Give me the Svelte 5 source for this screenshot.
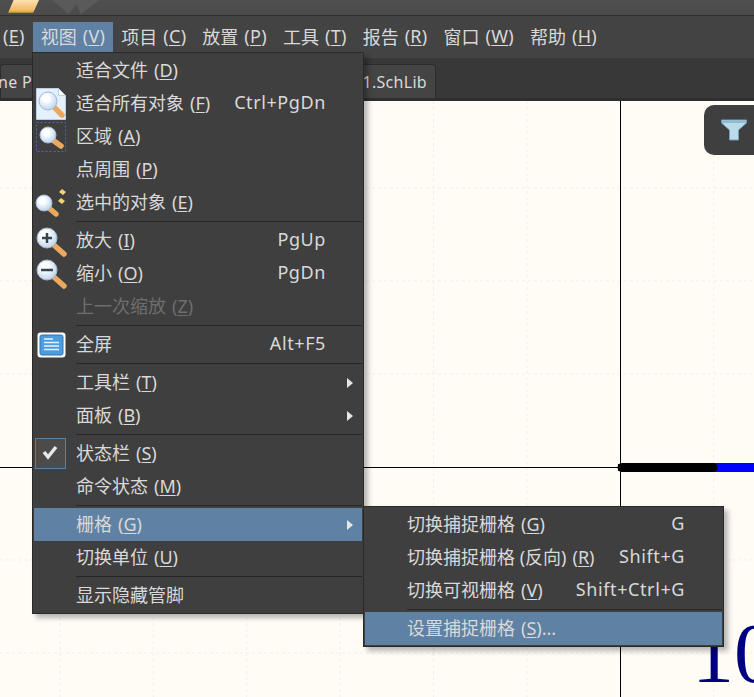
<script>
	const topMenus = [
		["", "E"],
		["视图", "V"],
		["项目", "C"],
		["放置", "P"],
		["工具", "T"],
		["报告", "R"],
		["窗口", "W"],
		["帮助", "H"],
	];

	// lens: [cx, cy, r, handle x, handle y], local to the 42x33 icon slot
	const viewMenu = [
		[
			{ label: "适合文件", key: "D" },
			{ label: "适合所有对象", key: "F", shortcut: "Ctrl+PgDn", icon: "page", lens: [14, 14, 9, 28, 28] },
			{ label: "区域", key: "A", icon: "area", lens: [14, 15, 8, 27, 26] },
			{ label: "点周围", key: "P" },
			{ label: "选中的对象", key: "E", icon: "selected", lens: [10, 17, 8, 22, 28] },
		],
		[
			{ label: "放大", key: "I", shortcut: "PgUp", icon: "plus", lens: [13, 14, 10, 30, 30] },
			{ label: "缩小", key: "O", shortcut: "PgDn", icon: "minus", lens: [13, 13, 10, 30, 29] },
			{ label: "上一次缩放", key: "Z", disabled: true },
		],
		[{ label: "全屏", shortcut: "Alt+F5", icon: "screen" }],
		[
			{ label: "工具栏", key: "T", more: true },
			{ label: "面板", key: "B", more: true },
		],
		[
			{ label: "状态栏", key: "S", icon: "check" },
			{ label: "命令状态", key: "M" },
		],
		[
			{ label: "栅格", key: "G", more: true, active: true },
			{ label: "切换单位", key: "U" },
		],
		[{ label: "显示隐藏管脚" }],
	];

	const gridMenu = [
		[
			{ label: "切换捕捉栅格", key: "G", shortcut: "G" },
			{ label: "切换捕捉栅格 (反向)", key: "R", shortcut: "Shift+G" },
			{ label: "切换可视栅格", key: "V", shortcut: "Shift+Ctrl+G" },
		],
		[{ label: "设置捕捉栅格", key: "S", tail: "...", active: true }],
	];

	const gridX = [60, 153.3, 246.7, 340, 433.5, 527, 713.7];
	const gridY = [87, 180, 273, 459, 552];
</script>

{#snippet menuList(groups)}
	{#each groups as group, g}
		{#if g > 0}<div class="sep"></div>{/if}
		{#each group as item}
			<div class="row" class:active={item.active} class:disabled={item.disabled}>
				<span class="slot">
					{#if item.icon}
						<svg width="42" height="33" viewBox="0 0 42 33">
							{#if item.icon === "page"}
								<path d="M2.500 1.500h22l7 7v24h-29z" fill="#e4f0fb" stroke="#b9cfe6" />
								<path d="M24.500 1.500v7h7z" fill="#fff" stroke="#b9cfe6" />
							{:else if item.icon === "area"}
								<rect x="2.500" y="2.500" width="29" height="29" fill="none" stroke="#5a64a8" stroke-dasharray="2 2" />
							{:else if item.icon === "selected"}
								<path d="M28 3l4 3-3 3-4-3zM27 12l4 3-3 3-4-3z" fill="#f2d272" />
							{:else if item.icon === "screen"}
								<rect x="3.500" y="4.500" width="28" height="25" rx="3" fill="#fff" />
								<rect x="6" y="7" width="23" height="20" rx="2" fill="#4c9ce0" stroke="#2f74b5" />
								<path d="M10 11h9M10 14.500h15M10 18h15M10 21.500h15" stroke="#e6f3fd" stroke-width="1.300" />
							{:else if item.icon === "check"}
								<rect x="1.500" y="1.500" width="30" height="30" fill="#4b4b4b" stroke="#5d7f9e" />
								<path d="M10 15l4 5 8-10" fill="none" stroke="#e8e8e8" stroke-width="3.500" />
							{/if}
							{#if item.lens}
								{@const [cx, cy, r, hx, hy] = item.lens}
								<line x1={cx + r * 0.72} y1={cy + r * 0.72} x2={hx} y2={hy} stroke="#eba95f" stroke-width="5.500" stroke-linecap="round" />
								<circle {cx} {cy} {r} fill="url(#lens-fill)" stroke="#a8b8cc" />
							{/if}
							{#if item.icon === "plus"}
								<path d="M8 14h10M13 9v10" stroke="#39424f" stroke-width="2.500" />
							{:else if item.icon === "minus"}
								<path d="M7 13h12" stroke="#39424f" stroke-width="2.500" />
							{/if}
						</svg>
					{/if}
				</span>
				<span class="label">
					{item.label}{#if item.key}<span class="key">(<u>{item.key}</u>)</span>{/if}{item.tail ?? ""}
				</span>
				{#if item.shortcut}<span class="shortcut">{item.shortcut}</span>{/if}
				{#if item.more}<span class="arrow"></span>{/if}
			</div>
		{/each}
	{/each}
{/snippet}

<div class="app">
	<svg class="defs" width="0" height="0">
		<radialGradient id="lens-fill" cx="0.4" cy="0.35" r="0.7">
			<stop offset="0.25" stop-color="#ffffff" />
			<stop offset="1" stop-color="#b4d0f0" />
		</radialGradient>
	</svg>

	<div class="titlebar">
		<span class="folder"></span>
		<span class="ghost"></span>
	</div>

	<nav class="menubar">
		{#each topMenus as [name, key]}
			<span class="top-item" class:open={key === "V"}>
				{name}<span class="key" class:bare={!name}>(<u>{key}</u>)</span>
			</span>
		{/each}
	</nav>

	<div class="tabbar">
		<div class="tab first">ne Page</div>
		<div class="tab">1.SchLib</div>
	</div>

	<div class="canvas">
		<svg class="sheet" width="754" height="596" viewBox="0 0 754 596">
			{#each gridX as x}
				<line x1={x} y1="0" x2={x} y2="596" class="grid" />
			{/each}
			{#each gridY as y}
				<line x1="0" y1={y} x2="754" y2={y} class="grid" />
			{/each}
			<line x1="0" y1="366.500" x2="620" y2="366.500" stroke="#000" />
			<line x1="620.500" y1="0" x2="620.500" y2="596" stroke="#000" />
			<line x1="700" y1="366.500" x2="754" y2="366.500" stroke="#0000ff" stroke-width="9" />
			<line x1="622" y1="366.500" x2="713" y2="366.500" stroke="#000" stroke-width="9" stroke-linecap="round" />
			<path d="M616 366.500h10M618.500 363v7M622.500 363v7" stroke="#000" />
			<text x="692" y="581" class="pin-number">10</text>
		</svg>
		<div class="filter">
			<svg width="28" height="24" viewBox="0 0 28 24">
				<path d="M1.500 2h25v3l-8 7v10h-9V12l-8-7z" fill="#b9dcea" stroke="#7b9db8" />
				<path d="M2 3h24v2H2z" fill="#8fbad4" />
			</svg>
		</div>
	</div>

	<div class="menu view-menu">
		{@render menuList(viewMenu)}
	</div>
	<div class="menu grid-menu">
		{@render menuList(gridMenu)}
	</div>
</div>

<style>
	:global(body) {
		margin: 0;
		background: #fffcf6;
	}
	.app {
		position: relative;
		display: flex;
		flex-direction: column;
		width: 754px;
		height: 697px;
		overflow: hidden;
		font-family: "Noto Sans", "Noto Sans CJK SC", sans-serif;
		font-size: 18px;
		color: #d9d9d9;
	}
	.defs {
		position: absolute;
	}
	u {
		text-underline-offset: 2px;
		text-decoration-thickness: 1px;
	}
	.key {
		margin-left: 6px;
		letter-spacing: 0.3px;
	}
	.key.bare {
		margin-left: 0;
	}
	.label .key {
		letter-spacing: 0;
	}
	.titlebar {
		position: relative;
		flex: none;
		height: 15px;
		background: linear-gradient(#4f4f4f, #4b4b4b);
		border-bottom: 1px solid #2f2f2f;
		overflow: hidden;
	}
	.folder {
		position: absolute;
		left: 8px;
		top: 0;
		width: 31px;
		height: 13px;
		background: linear-gradient(#fbe2ae, #eeb565 85%, #a97f3f);
		clip-path: polygon(18% 0, 100% 0, 81% 100%, 0 100%);
	}
	.ghost {
		position: absolute;
		left: 52px;
		top: 0;
		width: 48px;
		height: 14px;
		background: #5a5a5a;
		clip-path: polygon(0 0, 100% 0, 60% 100%, 50% 30%, 35% 100%);
	}
	.menubar {
		flex: none;
		display: flex;
		align-items: flex-start;
		height: 36px;
		padding-top: 6px;
		background: #434343;
	}
	.top-item {
		display: flex;
		align-items: center;
		height: 30px;
		padding: 0 8px 2px;
		box-sizing: border-box;
		white-space: pre;
	}
	.top-item:first-child {
		padding: 0 8px 2px 3px;
	}
	.top-item.open {
		background: #5f81a3;
	}
	.tabbar {
		flex: none;
		display: flex;
		align-items: flex-end;
		height: 40px;
		background: #383838;
		border-bottom: 3px solid #2f2f2f;
	}
	.tab {
		display: flex;
		align-items: center;
		justify-content: flex-end;
		box-sizing: border-box;
		width: 136px;
		height: 34px;
		padding-right: 8px;
		background: #444;
		border: 1px solid #2c2c2c;
		border-bottom: 0;
		border-radius: 4px 4px 0 0;
		font-size: 16px;
		letter-spacing: 0.3px;
	}
	.tab.first {
		justify-content: flex-start;
		width: 300px;
		padding: 0;
		text-indent: -3px;
	}
	.canvas {
		position: relative;
		flex: 1;
		background: #fffcf6;
	}
	.sheet {
		position: absolute;
		inset: 0;
	}
	.grid {
		stroke: #f1efe9;
		stroke-dasharray: 3 3;
	}
	.pin-number {
		font-family: "Liberation Serif", serif;
		font-size: 84px;
		fill: #000080;
	}
	.filter {
		position: absolute;
		left: 704px;
		top: 4px;
		display: flex;
		align-items: center;
		width: 50px;
		height: 50px;
		padding-left: 16px;
		box-sizing: border-box;
		background: #3f3f3f;
		border-radius: 10px 0 0 10px;
	}
	.menu {
		position: absolute;
		box-sizing: border-box;
		padding: 1px;
		background: #3f3f3f;
		border: 1px solid #2a2a2a;
		box-shadow: 4px 4px 5px rgba(0, 0, 0, 0.28);
	}
	.view-menu {
		left: 32px;
		top: 52px;
		width: 332px;
	}
	.grid-menu {
		left: 363px;
		top: 506px;
		width: 361px;
	}
	.grid-menu .shortcut {
		padding-right: 37px;
	}
	.row {
		display: flex;
		align-items: center;
		height: 33px;
		white-space: nowrap;
	}
	.row.active {
		background: #5f81a3;
	}
	.row.disabled {
		color: #6e6e6e;
	}
	.slot {
		flex: none;
		width: 42px;
		height: 33px;
	}
	.slot svg {
		display: block;
	}
	.label {
		padding-bottom: 4px;
	}
	.shortcut {
		margin-left: auto;
		padding-right: 36px;
		padding-bottom: 4px;
		letter-spacing: 0.6px;
	}
	.arrow {
		margin-left: auto;
		margin-right: 9px;
		border-left: 6px solid #e6e6e6;
		border-top: 5px solid transparent;
		border-bottom: 5px solid transparent;
	}
	.sep {
		height: 1px;
		margin: 2px 0 2px 42px;
		background: #262626;
	}
</style>
